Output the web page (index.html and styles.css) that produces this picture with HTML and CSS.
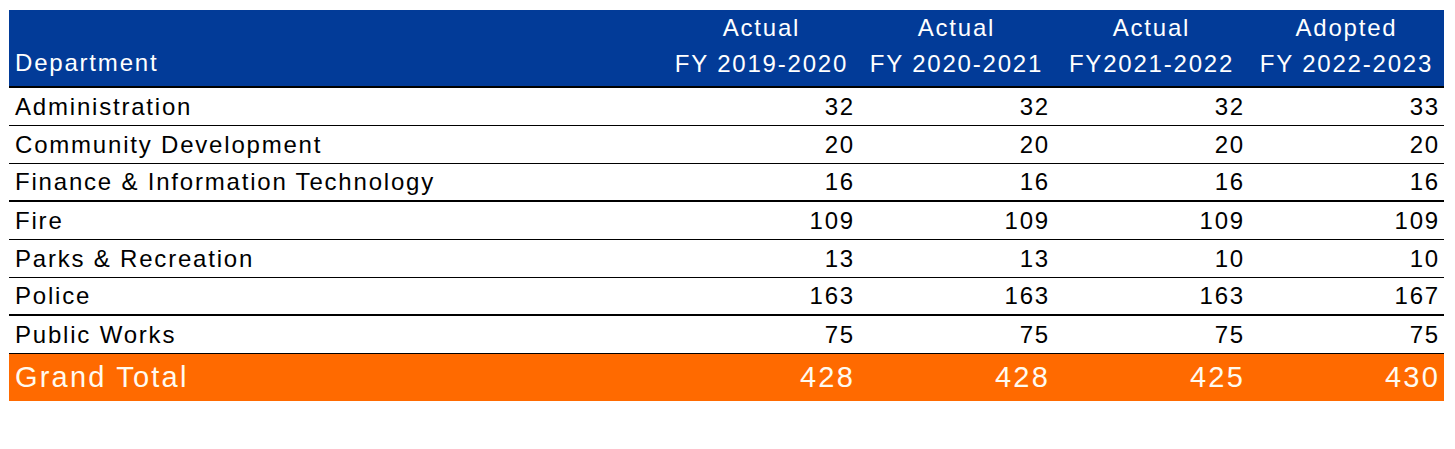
FILE: index.html
```html
<!DOCTYPE html>
<html lang="en">
<head>
<meta charset="utf-8">
<title>Department Staffing</title>
<link rel="stylesheet" href="styles.css">
</head>
<body>
<div class="table">
  <div class="row head">
    <div class="cell name">Department</div>
    <div class="cell hcol">Actual<br>FY 2019-2020</div>
    <div class="cell hcol">Actual<br>FY 2020-2021</div>
    <div class="cell hcol">Actual<br>FY2021-2022</div>
    <div class="cell hcol">Adopted<br>FY 2022-2023</div>
  </div>
  <div class="row body">
    <div class="cell name">Administration</div>
    <div class="cell num">32</div><div class="cell num">32</div><div class="cell num">32</div><div class="cell num">33</div>
  </div>
  <div class="row body">
    <div class="cell name">Community Development</div>
    <div class="cell num">20</div><div class="cell num">20</div><div class="cell num">20</div><div class="cell num">20</div>
  </div>
  <div class="row body thick">
    <div class="cell name">Finance &amp; Information Technology</div>
    <div class="cell num">16</div><div class="cell num">16</div><div class="cell num">16</div><div class="cell num">16</div>
  </div>
  <div class="row body">
    <div class="cell name">Fire</div>
    <div class="cell num">109</div><div class="cell num">109</div><div class="cell num">109</div><div class="cell num">109</div>
  </div>
  <div class="row body">
    <div class="cell name">Parks &amp; Recreation</div>
    <div class="cell num">13</div><div class="cell num">13</div><div class="cell num">10</div><div class="cell num">10</div>
  </div>
  <div class="row body thick">
    <div class="cell name">Police</div>
    <div class="cell num">163</div><div class="cell num">163</div><div class="cell num">163</div><div class="cell num">167</div>
  </div>
  <div class="row body">
    <div class="cell name">Public Works</div>
    <div class="cell num">75</div><div class="cell num">75</div><div class="cell num">75</div><div class="cell num">75</div>
  </div>
  <div class="row total">
    <div class="cell name">Grand Total</div>
    <div class="cell num">428</div><div class="cell num">428</div><div class="cell num">425</div><div class="cell num">430</div>
  </div>
</div>
</body>
</html>
```

FILE: styles.css
```css
html, body {
  margin: 0;
  padding: 0;
  background: #ffffff;
}
body {
  padding: 10px 0 0 9px;
  font-family: "Liberation Sans", Arial, sans-serif;
  font-size: 24px;
  letter-spacing: 1.8px;
  color: #000000;
}
.table {
  width: 1435px;
}
.row {
  display: grid;
  grid-template-columns: 655px repeat(4, 195px);
  box-sizing: border-box;
}
.cell {
  white-space: nowrap;
}
.cell.name {
  padding-left: 6px;
}
.cell.num {
  text-align: right;
  padding-right: 4px;
}
.head {
  background: #023b98;
  color: #ffffff;
  height: 78px;
  border-bottom: 2px solid #000000;
  line-height: 36px;
}
.head .name {
  align-self: end;
  padding-bottom: 5px;
}
.head .hcol {
  text-align: center;
  padding-top: 0;
}
.body {
  height: 38px;
  line-height: 37px;
  border-bottom: 1px solid #000000;
}
.body.thick {
  border-bottom-width: 2px;
  line-height: 36px;
}
.total {
  height: 47px;
  line-height: 46px;
  background: #ff6a00;
  color: #fffaf0;
  font-size: 29px;
  letter-spacing: 2.2px;
}
```
